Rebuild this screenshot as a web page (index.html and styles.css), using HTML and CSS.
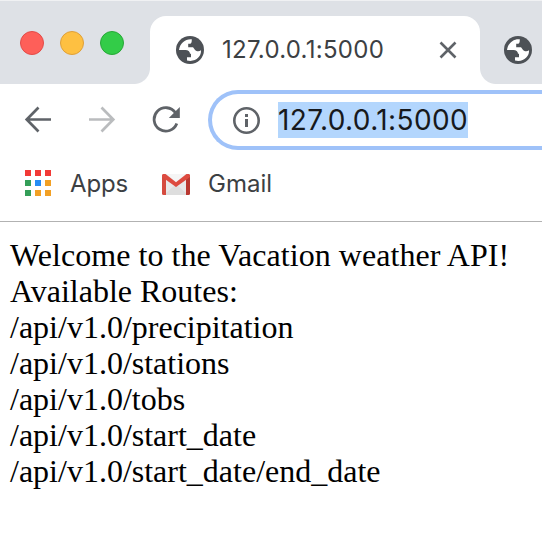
FILE: index.html
```html
<!DOCTYPE html>
<html lang="en">
<head>
<meta charset="utf-8">
<title>127.0.0.1:5000</title>
<link rel="stylesheet" href="styles.css">
</head>
<body>
<svg class="defs" width="0" height="0" aria-hidden="true">
  <symbol id="globe" viewBox="0 0 28 28">
    <circle cx="14" cy="14" r="14" fill="#4d5156"/>
    <path class="land" d="M15.800 3.200C9.500 2.600 4 6.800 3 14H9.500C12 14 14 15.400 14 17.700H15V21.300H11V24.500C19.500 26.500 25.500 20.500 25 14.300C23.700 15.300 22 15.500 20.500 15C18.500 14.500 18.300 12.500 17 11.300H12.200V7.700H14C15.500 7.700 15.800 6 15.800 3.200Z"/>
  </symbol>
</svg>
<header class="tabstrip">
  <div class="lights"><i class="light red"></i><i class="light yellow"></i><i class="light green"></i></div>
  <div class="tab">
    <svg class="favicon" width="28" height="28"><use href="#globe"/></svg>
    <span class="tab-title">127.0.0.1:5000</span>
    <svg class="close" width="18" height="18" viewBox="0 0 18 18"><path d="M1.500 1.500 16.500 16.500M16.500 1.500 1.500 16.500" fill="none" stroke="#5f6368" stroke-width="2.600"/></svg>
  </div>
  <div class="next-tab"><svg class="favicon" width="28" height="28"><use href="#globe"/></svg></div>
</header>
<nav class="toolbar">
  <svg class="back" width="28" height="28" viewBox="0 0 28 28"><path d="M27 13.500H3M14.500 1.500 2.700 13.500 14.500 25.500" fill="none" stroke="#5f6368" stroke-width="2.700"/></svg>
  <svg class="forward" width="28" height="28" viewBox="0 0 28 28"><path d="M0 13.500H24M12.500 1.500 24.300 13.500 12.500 25.500" fill="none" stroke="#babcbe" stroke-width="2.700"/></svg>
  <svg class="reload" width="28" height="28" viewBox="0 0 28 28"><path d="M23.500 6.800A11.700 11.700 0 1 0 24.800 17.500" fill="none" stroke="#5f6368" stroke-width="2.800"/><path d="M27.800 1V12H16.800Z" fill="#5f6368"/></svg>
  <div class="omnibox">
    <svg width="28" height="28" viewBox="0 0 28 28"><circle cx="14.500" cy="14.500" r="12.200" fill="none" stroke="#5f6368" stroke-width="2.600"/><path d="M13 8h3v3h-3zM13 13h3v8h-3z" fill="#5f6368"/></svg>
    <span class="url">127.0.0.1:5000</span>
  </div>
</nav>
<div class="bookmarks">
  <svg class="apps" width="26" height="26" viewBox="0 0 26 26"><path d="M0 0h6v6H0zM10 0h6v6h-6zM20 0h6v6h-6z" fill="#f23a36"/><path d="M0 10h6v6H0zM0 20h6v6H0z" fill="#349e58"/><path d="M10 10h6v6h-6z" fill="#258df5"/><path d="M20 10h6v6h-6zM10 20h6v6h-6zM20 20h6v6h-6z" fill="#f2a024"/></svg>
  <span class="label apps-label">Apps</span>
  <svg class="gmail" width="28" height="21" viewBox="0 0 28 21"><path d="M2 0h24v21H2z" fill="#e9e9e9"/><path d="M2 21 14 10 26 21Z" fill="#dedede"/><path d="M4 0h20L14 8Z" fill="#f5f5f5"/><path d="M0 2Q0 0 2 0L4 3V21H1.500Q0 21 0 19.500Z" fill="#d54b3f"/><path d="M28 2Q28 0 26 0L24 3V21h2.500Q28 21 28 19.500Z" fill="#b93830"/><path d="M0 2Q0 0 2 0H3.500L14 8.300 24.500 0H26Q28 0 28 2V3L14 13 0 3Z" fill="#dd4b40"/></svg>
  <span class="label apps-label gmail-label">Gmail</span>
</div>
<main class="page"><span class="welcome">Welcome to the Vacation weather API!</span><br>Available Routes:<br>/api/v1.0/precipitation<br>/api/v1.0/stations<br>/api/v1.0/tobs<br>/api/v1.0/start_date<br>/api/v1.0/start_date/end_date</main>
</body>
</html>
```
FILE: styles.css
```css
* { box-sizing: border-box; }
body { margin: 0; width: 542px; height: 560px; overflow: hidden; background: #fff; font-family: Inter, sans-serif; }
svg { display: block; flex: none; }
.defs { position: absolute; }
.tabstrip { display: flex; height: 84px; padding-top: 16px; background: #dee1e6; box-shadow: inset 0 1px #f0f1f3; }
.lights { display: flex; gap: 16px; width: 150px; padding: 15px 0 0 20px; background: #dee1e6; }
.light { width: 24px; height: 24px; border-radius: 50%; border: 1px solid; }
.red { background: #fe5f59; border-color: #e34b48; }
.yellow { background: #fec041; border-color: #dfa039; }
.green { background: #33cc48; border-color: #27a837; }
.tab { display: flex; align-items: center; width: 330px; height: 68px; padding-left: 26px; background: #fff; border-radius: 16px 16px 0 0; }
.lights, .next-tab { position: relative; }
.lights::after, .next-tab::before { content: ""; position: absolute; bottom: 0; width: 16px; height: 16px; }
.lights::after { right: 0; background: radial-gradient(circle at 0 0, #dee1e6 15.5px, #fff 16.5px); }
.next-tab::before { left: 0; background: radial-gradient(circle at 100% 0, #dee1e6 15.5px, #fff 16.5px); }
.land { fill: #fff; }
.tab-title { width: 162px; margin-left: 18px; font-size: 24px; line-height: 32px; letter-spacing: .28px; white-space: nowrap; color: #3c4043; }
.close { margin-left: 55px; }
.next-tab { width: 62px; padding: 20px 0 0 24px; }
.toolbar { display: flex; height: 72px; padding: 6px 0 0 24px; }
.back, .forward, .reload { margin-top: 16px; }
.forward { margin-left: 37px; }
.reload { margin-left: 35px; }
.omnibox { display: flex; align-items: center; flex: 1; height: 60px; margin-left: 28px; padding-left: 20px; border: 4px solid #9fc2f9; border-right: 0; border-radius: 30px 0 0 30px; }
.url { width: 190px; height: 36px; margin-left: 18px; background: #b3d6fd; color: #17191c; font-size: 28px; line-height: 37px; letter-spacing: .4px; white-space: nowrap; }
.bookmarks { display: flex; height: 66px; padding: 14px 0 0 25px; border-bottom: 1px solid #b2b2b2; }
.label { font-size: 24px; line-height: 28px; color: #3c4043; white-space: nowrap; }
.apps-label { width: 58px; margin-left: 19px; letter-spacing: -.15px; }
.gmail { margin: 4px 0 0 34px; }
.gmail-label { margin-left: 18px; letter-spacing: 0; }
.page { padding: 15px 10px; font: 32px/36px "Liberation Serif", serif; color: #000; white-space: nowrap; }
.welcome { letter-spacing: .06px; }
```
